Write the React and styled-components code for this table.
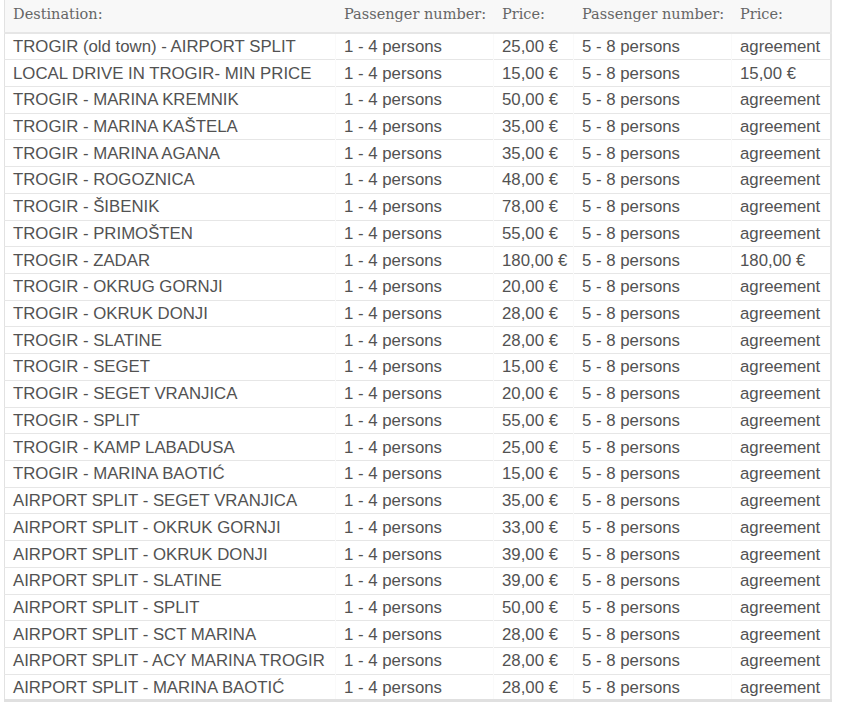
import React from 'react';
import styled, { createGlobalStyle } from 'styled-components';

const GlobalStyle = createGlobalStyle`
  html, body {
    margin: 0;
    padding: 0;
    background: #fff;
  }
`;

const rows = [
  ['TROGIR (old town) - AIRPORT SPLIT', '25,00 €', 'agreement'],
  ['LOCAL DRIVE IN TROGIR- MIN PRICE', '15,00 €', '15,00 €'],
  ['TROGIR - MARINA KREMNIK', '50,00 €', 'agreement'],
  ['TROGIR - MARINA KAŠTELA', '35,00 €', 'agreement'],
  ['TROGIR - MARINA AGANA', '35,00 €', 'agreement'],
  ['TROGIR - ROGOZNICA', '48,00 €', 'agreement'],
  ['TROGIR - ŠIBENIK', '78,00 €', 'agreement'],
  ['TROGIR - PRIMOŠTEN', '55,00 €', 'agreement'],
  ['TROGIR - ZADAR', '180,00 €', '180,00 €'],
  ['TROGIR - OKRUG GORNJI', '20,00 €', 'agreement'],
  ['TROGIR - OKRUK DONJI', '28,00 €', 'agreement'],
  ['TROGIR - SLATINE', '28,00 €', 'agreement'],
  ['TROGIR - SEGET', '15,00 €', 'agreement'],
  ['TROGIR - SEGET VRANJICA', '20,00 €', 'agreement'],
  ['TROGIR - SPLIT', '55,00 €', 'agreement'],
  ['TROGIR - KAMP LABADUSA', '25,00 €', 'agreement'],
  ['TROGIR - MARINA BAOTIĆ', '15,00 €', 'agreement'],
  ['AIRPORT SPLIT - SEGET VRANJICA', '35,00 €', 'agreement'],
  ['AIRPORT SPLIT - OKRUK GORNJI', '33,00 €', 'agreement'],
  ['AIRPORT SPLIT - OKRUK DONJI', '39,00 €', 'agreement'],
  ['AIRPORT SPLIT - SLATINE', '39,00 €', 'agreement'],
  ['AIRPORT SPLIT - SPLIT', '50,00 €', 'agreement'],
  ['AIRPORT SPLIT - SCT MARINA', '28,00 €', 'agreement'],
  ['AIRPORT SPLIT - ACY MARINA TROGIR', '28,00 €', 'agreement'],
  ['AIRPORT SPLIT - MARINA BAOTIĆ', '28,00 €', 'agreement'],
];

const Page = styled.div`
  padding-left: 4px;
  width: 826px;
`;

const PriceTable = styled.table`
  width: 826px;
  border-collapse: collapse;
  table-layout: fixed;
  border-left: 1px solid #e2e2e2;
  border-right: 2px solid #e4e4e4;
  border-bottom: 3px solid #e0e0e0;
`;

const HeadRow = styled.tr`
  height: 33px;
  background: #f8f8f8;
  border-bottom: 2px solid #e6e6e6;
`;

const HeadCell = styled.th`
  font-family: 'DejaVu Serif', 'Liberation Serif', serif;
  font-size: 14.5px;
  font-weight: normal;
  color: #666;
  text-align: left;
  padding: 0 0 4px 8px;
  white-space: nowrap;
  vertical-align: middle;
  border-left: 1px solid #f8f8f8;
  &:first-child {
    border-left: none;
  }
`;

const Row = styled.tr`
  height: 26.72px;
  background: #fff;
  border-bottom: 1px solid #e6e6e6;
  &:last-child {
    border-bottom: none;
  }
`;

const Cell = styled.td`
  font-family: 'Liberation Sans', Arial, sans-serif;
  font-size: 16.8px;
  color: #525252;
  padding: 1px 0 0 8px;
  white-space: nowrap;
  overflow: hidden;
  vertical-align: middle;
  border-left: 1px solid #fafafa;
  &:first-child {
    border-left: none;
  }
`;

const App = () => {
  return (
    <Page>
      <GlobalStyle />
      <PriceTable>
        <colgroup>
          <col style={{ width: 331 }} />
          <col style={{ width: 158 }} />
          <col style={{ width: 80 }} />
          <col style={{ width: 158 }} />
          <col style={{ width: 99 }} />
        </colgroup>
        <thead>
          <HeadRow>
            <HeadCell>Destination:</HeadCell>
            <HeadCell>Passenger number:</HeadCell>
            <HeadCell>Price:</HeadCell>
            <HeadCell>Passenger number:</HeadCell>
            <HeadCell>Price:</HeadCell>
          </HeadRow>
        </thead>
        <tbody>
          {rows.map(([dest, price, price2]) => (
            <Row key={dest}>
              <Cell>{dest}</Cell>
              <Cell>1 - 4 persons</Cell>
              <Cell>{price}</Cell>
              <Cell>5 - 8 persons</Cell>
              <Cell>{price2}</Cell>
            </Row>
          ))}
        </tbody>
      </PriceTable>
    </Page>
  );
};

export default App;
